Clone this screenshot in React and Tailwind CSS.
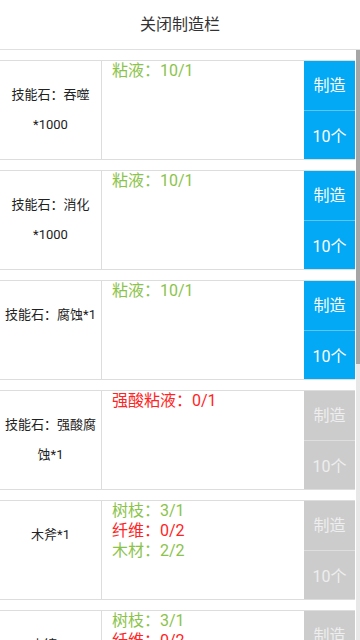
import React from "react";

const GREEN = "text-[#8bc34a]";
const RED = "text-[#ff2424]";

const recipes = [
  { name: "技能石：吞噬*1000", needs: [{ t: "粘液：10/1", ok: true }], ready: true },
  { name: "技能石：消化*1000", needs: [{ t: "粘液：10/1", ok: true }], ready: true },
  { name: "技能石：腐蚀*1", needs: [{ t: "粘液：10/1", ok: true }], ready: true },
  { name: "技能石：强酸腐蚀*1", needs: [{ t: "强酸粘液：0/1", ok: false }], ready: false },
  {
    name: "木斧*1",
    needs: [
      { t: "树枝：3/1", ok: true },
      { t: "纤维：0/2", ok: false },
      { t: "木材：2/2", ok: true },
    ],
    ready: false,
  },
  {
    name: "木镐*1",
    needs: [
      { t: "树枝：3/1", ok: true },
      { t: "纤维：0/2", ok: false },
      { t: "木材：2/2", ok: true },
    ],
    ready: false,
  },
];

function RecipeRow({ item }) {
  const btn = item.ready
    ? "bg-[#03a9f4] text-white"
    : "bg-[#cccccc] text-[#eeeeee]";
  const divider = item.ready ? "border-[#5cc6f7]" : "border-[#dedede]";
  return (
    <div className="flex h-[100px] shrink-0 border-y border-[#dddddd] bg-white">
      <div className="w-[102px] shrink-0 border-r border-[#dddddd] px-[4px] pt-[19px] text-center text-[13px] leading-[30px] text-[#222]">
        {item.name}
      </div>
      <div className="flex-1 pl-[10px] text-[16px] leading-[20px]">
        {item.needs.map((n, i) => (
          <div key={i} className={n.ok ? GREEN : RED}>
            {n.t}
          </div>
        ))}
      </div>
      <div className="flex w-[51px] shrink-0 flex-col text-[16px]">
        <button className={`flex h-[50px] items-center justify-center border-b ${divider} ${btn}`}>
          制造
        </button>
        <button className={`flex flex-1 items-center justify-center pt-[3px] ${btn}`}>
          10个
        </button>
      </div>
    </div>
  );
}

export default function App() {
  return (
    <div className="flex h-[640px] w-[360px] flex-col overflow-hidden bg-white font-['Roboto','Noto_Sans_CJK_SC',sans-serif]">
      <div className="flex h-[49px] shrink-0 items-center justify-center text-[16px] text-[#333]">
        关闭制造栏
      </div>
      <div className="relative flex-1 overflow-hidden border-t border-[#e0e0e0]">
        <div className="flex flex-col gap-[10px] pr-[5px] pt-[10px]">
          {recipes.map((r, i) => (
            <RecipeRow key={i} item={r} />
          ))}
        </div>
        {/* fake scrollbar */}
        <div className="absolute right-0 top-0 h-full w-[4px] bg-[#e8e8e8]">
          <div className="h-[314px] w-full bg-[#a6a6a6]" />
        </div>
      </div>
    </div>
  );
}
